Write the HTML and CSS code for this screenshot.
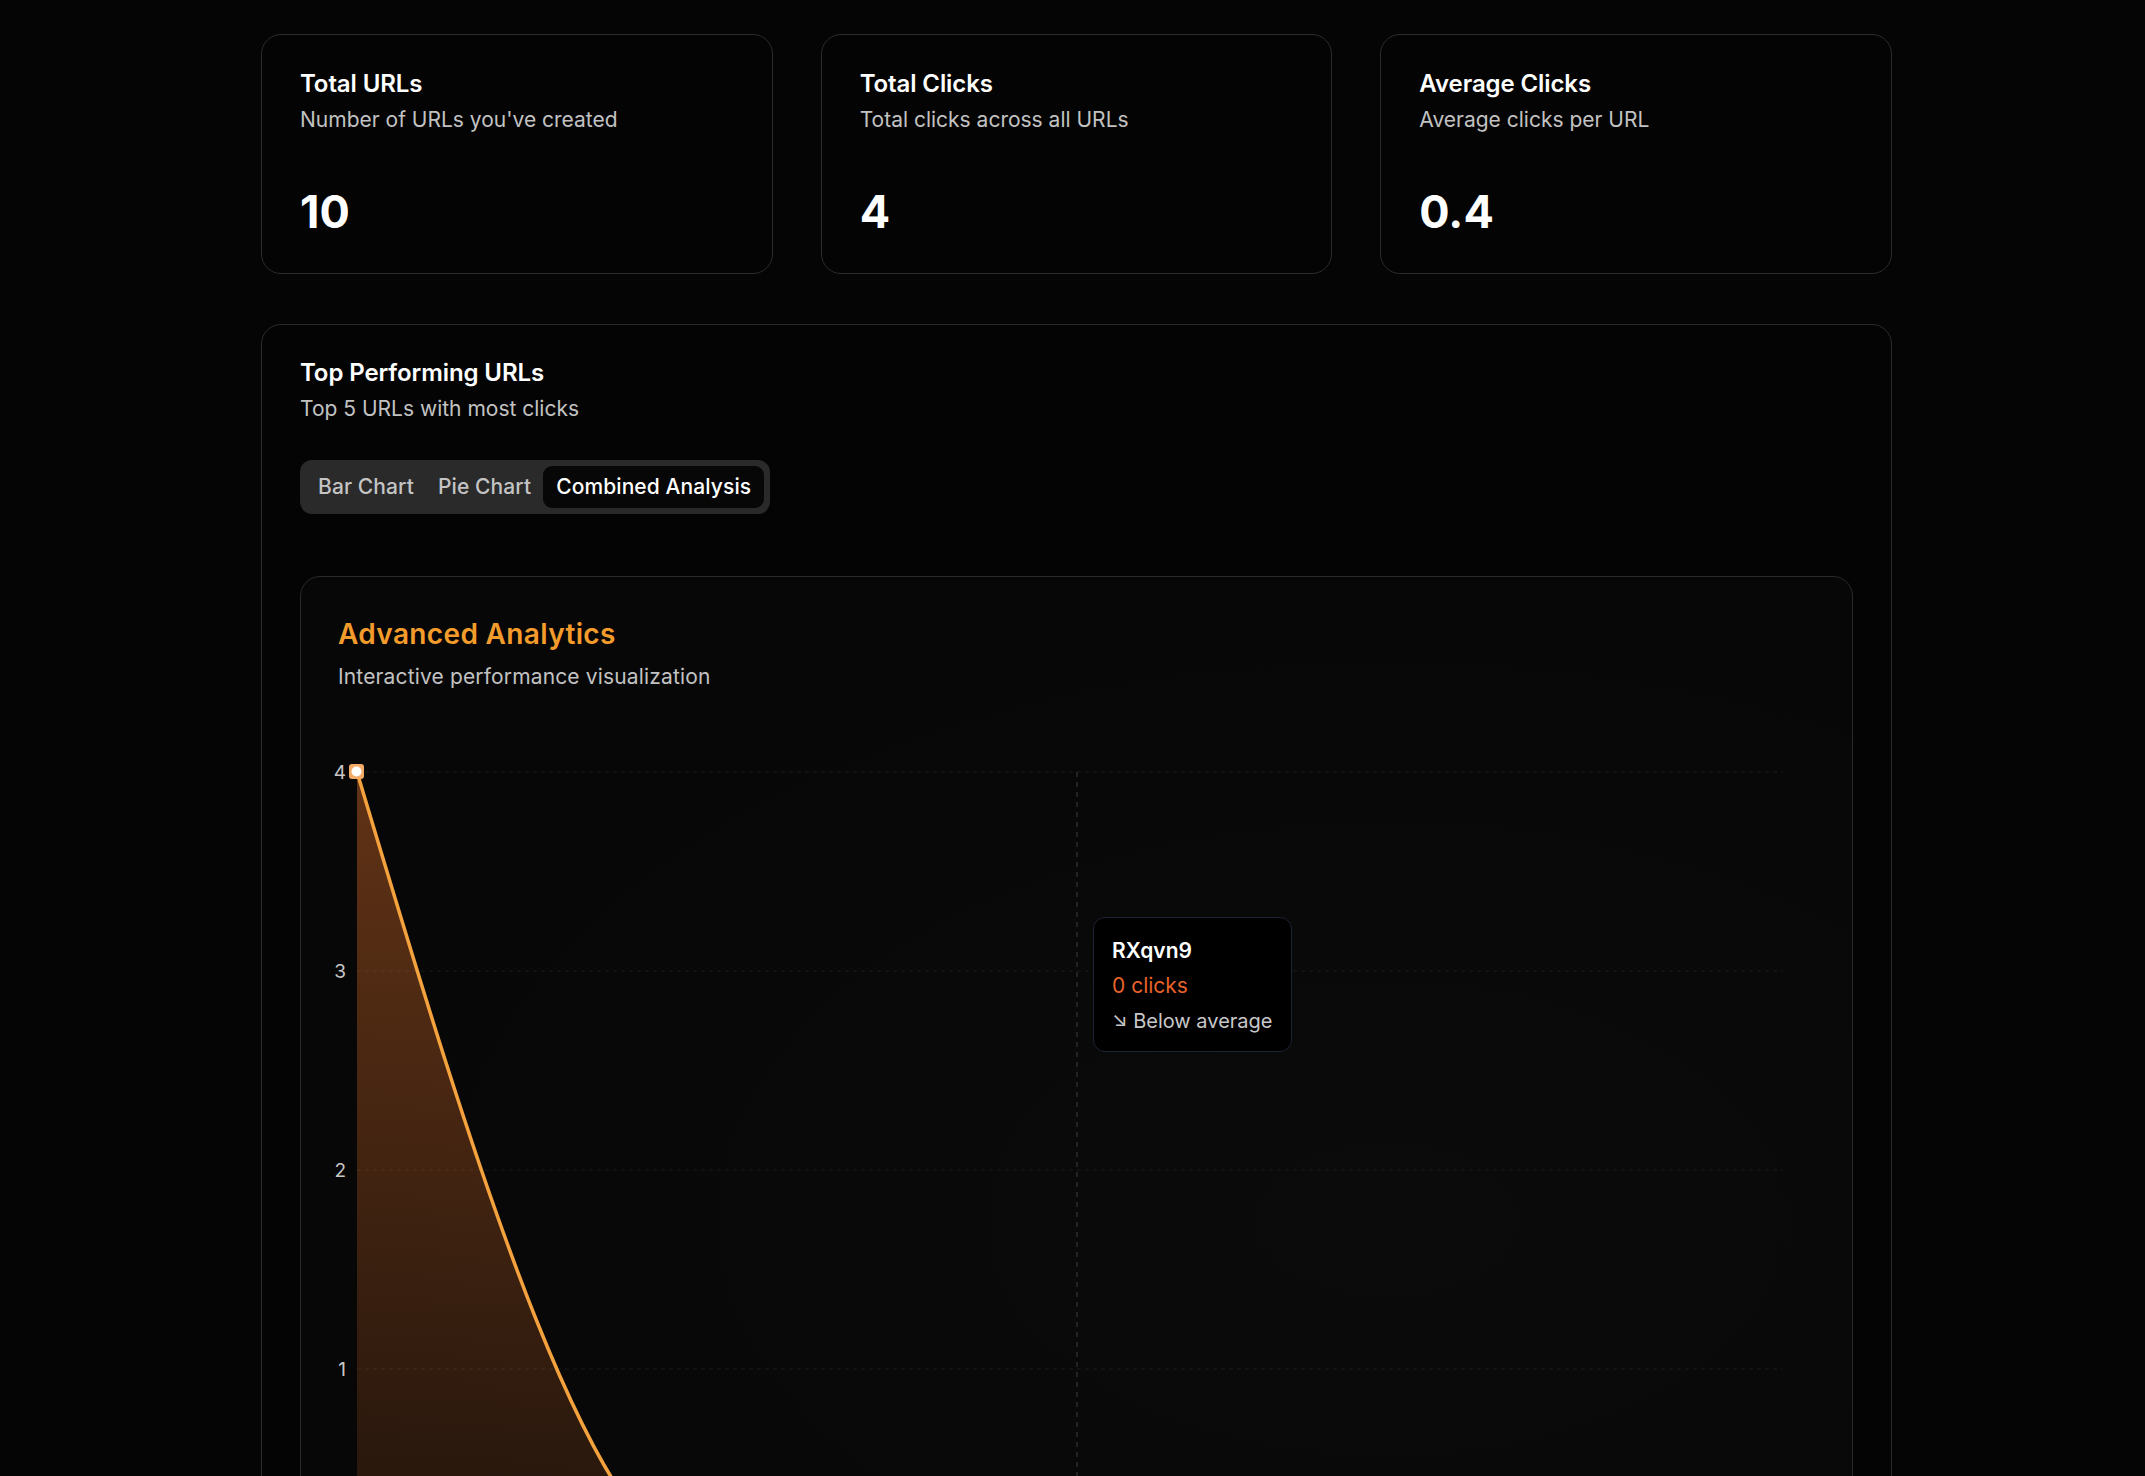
FILE: index.html
```html
<!DOCTYPE html>
<html lang="en">
<head>
  <meta charset="UTF-8" />
  <meta name="viewport" content="width=device-width, initial-scale=1.0"/>
  <title>URL Analytics</title>
  <link rel="stylesheet" href="styles.css">
</head>
<body>
  <main class="dashboard">
    <section class="stats">
      <div class="card">
        <h3 class="card-title">Total URLs</h3>
        <p class="card-desc">Number of URLs you've created</p>
        <div class="stat-value">10</div>
      </div>
      <div class="card">
        <h3 class="card-title">Total Clicks</h3>
        <p class="card-desc">Total clicks across all URLs</p>
        <div class="stat-value">4</div>
      </div>
      <div class="card">
        <h3 class="card-title">Average Clicks</h3>
        <p class="card-desc">Average clicks per URL</p>
        <div class="stat-value">0.4</div>
      </div>
    </section>

    <section class="card top-card">
      <h3 class="card-title">Top Performing URLs</h3>
      <p class="card-desc">Top 5 URLs with most clicks</p>

      <div class="tabs">
        <button class="tab">Bar Chart</button>
        <button class="tab">Pie Chart</button>
        <button class="tab active">Combined Analysis</button>
      </div>

      <div class="analytics">
        <h4 class="analytics-title">Advanced Analytics</h4>
        <p class="card-desc">Interactive performance visualization</p>

        <div class="chart">
          <svg class="chart-svg" width="1478" height="880" viewBox="0 0 1478 880">
            <defs>
              <linearGradient id="areaFill" x1="0" y1="0" x2="0" y2="1">
                <stop offset="0%" stop-color="#e8742c" stop-opacity="0.4"/>
                <stop offset="100%" stop-color="#e8742c" stop-opacity="0.12"/>
              </linearGradient>
            </defs>
            <!-- grid -->
            <g class="grid">
              <line x1="19" y1="41" x2="1445" y2="41"/>
              <line x1="19" y1="240" x2="1445" y2="240"/>
              <line x1="19" y1="439" x2="1445" y2="439"/>
              <line x1="19" y1="638" x2="1445" y2="638"/>
              <line x1="19" y1="837" x2="1445" y2="837"/>
            </g>
            <!-- y axis -->
            <g class="ticks">
              <text x="8" y="48">4</text>
              <text x="8" y="247">3</text>
              <text x="8" y="446">2</text>
              <text x="8" y="645">1</text>
              <text x="8" y="844">0</text>
            </g>
            <!-- cursor -->
            <line class="cursor" x1="739" y1="41" x2="739" y2="837"/>
            <!-- area + line -->
            <path d="M19,41 C138.3,439 257.7,837 377,837 L1451,837 L19,837 Z" fill="url(#areaFill)"/>
            <path d="M19,41 C138.3,439 257.7,837 377,837 L1451,837" fill="none" stroke="#f4a23e" stroke-width="3.5"/>
            <rect x="11" y="33" width="15" height="15" rx="3" fill="#f3ac68"/>
            <circle cx="18.5" cy="40.5" r="5" fill="#fff"/>
          </svg>

          <div class="tooltip">
            <div class="tip-name">RXqvn9</div>
            <div class="tip-clicks">0 clicks</div>
            <div class="tip-trend">&#8600; Below average</div>
          </div>
        </div>
      </div>
    </section>
  </main>
</body>
</html>
```

FILE: styles.css
```css
body {
  margin: 0;
  background: #050505;
  color: #fff;
  font-family: 'Inter', 'Noto Sans', sans-serif;
}
.dashboard {
  width: 1631px;
  margin: 34px 0 0 261px;
}
.stats {
  display: grid;
  grid-template-columns: repeat(3, 1fr);
  gap: 48px;
}
.card {
  background: #040404;
  border: 1px solid #2c2c2c;
  border-radius: 20px;
  padding: 37px 38px 34px;
}
.card-title {
  margin: 0;
  font-size: 24px;
  line-height: 24px;
  font-weight: 600;
  letter-spacing: -0.1px;
}
.card-desc {
  margin: 9px 0 0;
  font-size: 21px;
  line-height: 30px;
  color: #c2c2c2;
}
.stat-value {
  margin-top: 50px;
  font-size: 45px;
  line-height: 54px;
  font-weight: 700;
}
.top-card {
  margin-top: 50px;
  padding-top: 36px;
  padding-bottom: 38px;
}
.tabs {
  display: inline-flex;
  margin-top: 36px;
  padding: 6px;
  background: #2a2a2a;
  border-radius: 12px;
}
.tab {
  font-family: inherit;
  font-size: 21px;
  line-height: 30px;
  font-weight: 500;
  letter-spacing: 0.1px;
  color: #c4c4c4;
  background: none;
  border: none;
  padding: 6px 12px;
  border-radius: 9px;
  cursor: pointer;
}
.tab.active {
  background: #070707;
  color: #fff;
  padding: 6px 13px;
}
.analytics {
  margin-top: 62px;
  border: 1px solid #2a2a2a;
  border-radius: 20px;
  padding: 37px 37px 38px;
  background: radial-gradient(ellipse at 70% 60%, #0b0b0b 0%, #070707 70%);
}
.analytics-title {
  margin: 0;
  font-size: 28px;
  line-height: 40px;
  font-weight: 600;
  letter-spacing: 0.35px;
  color: #f39c2c;
}
.analytics .card-desc {
  margin-top: 8px;
  letter-spacing: 0.15px;
}
.chart {
  position: relative;
  margin-top: 39px;
}
.chart-svg {
  display: block;
  overflow: visible;
}
.grid line {
  stroke: #1b1b1b;
  stroke-dasharray: 4 4;
}
.ticks text {
  font-size: 19px;
  fill: #c8c8c8;
  text-anchor: end;
  font-family: 'Inter', sans-serif;
}
.cursor {
  stroke: #3c3c3c;
  stroke-dasharray: 5 5;
}
.tooltip {
  position: absolute;
  left: 755px;
  top: 186px;
  width: 161px;
  padding: 18px 18px 15px;
  background: #000;
  border: 1px solid #1c2334;
  border-radius: 12px;
}
.tip-name {
  font-size: 21px;
  line-height: 30px;
  font-weight: 600;
}
.tip-clicks {
  margin-top: 5px;
  font-size: 21px;
  line-height: 30px;
  color: #e8622a;
}
.tip-trend {
  margin-top: 5px;
  font-size: 20px;
  line-height: 30px;
  color: #c8c8c8;
}
```
